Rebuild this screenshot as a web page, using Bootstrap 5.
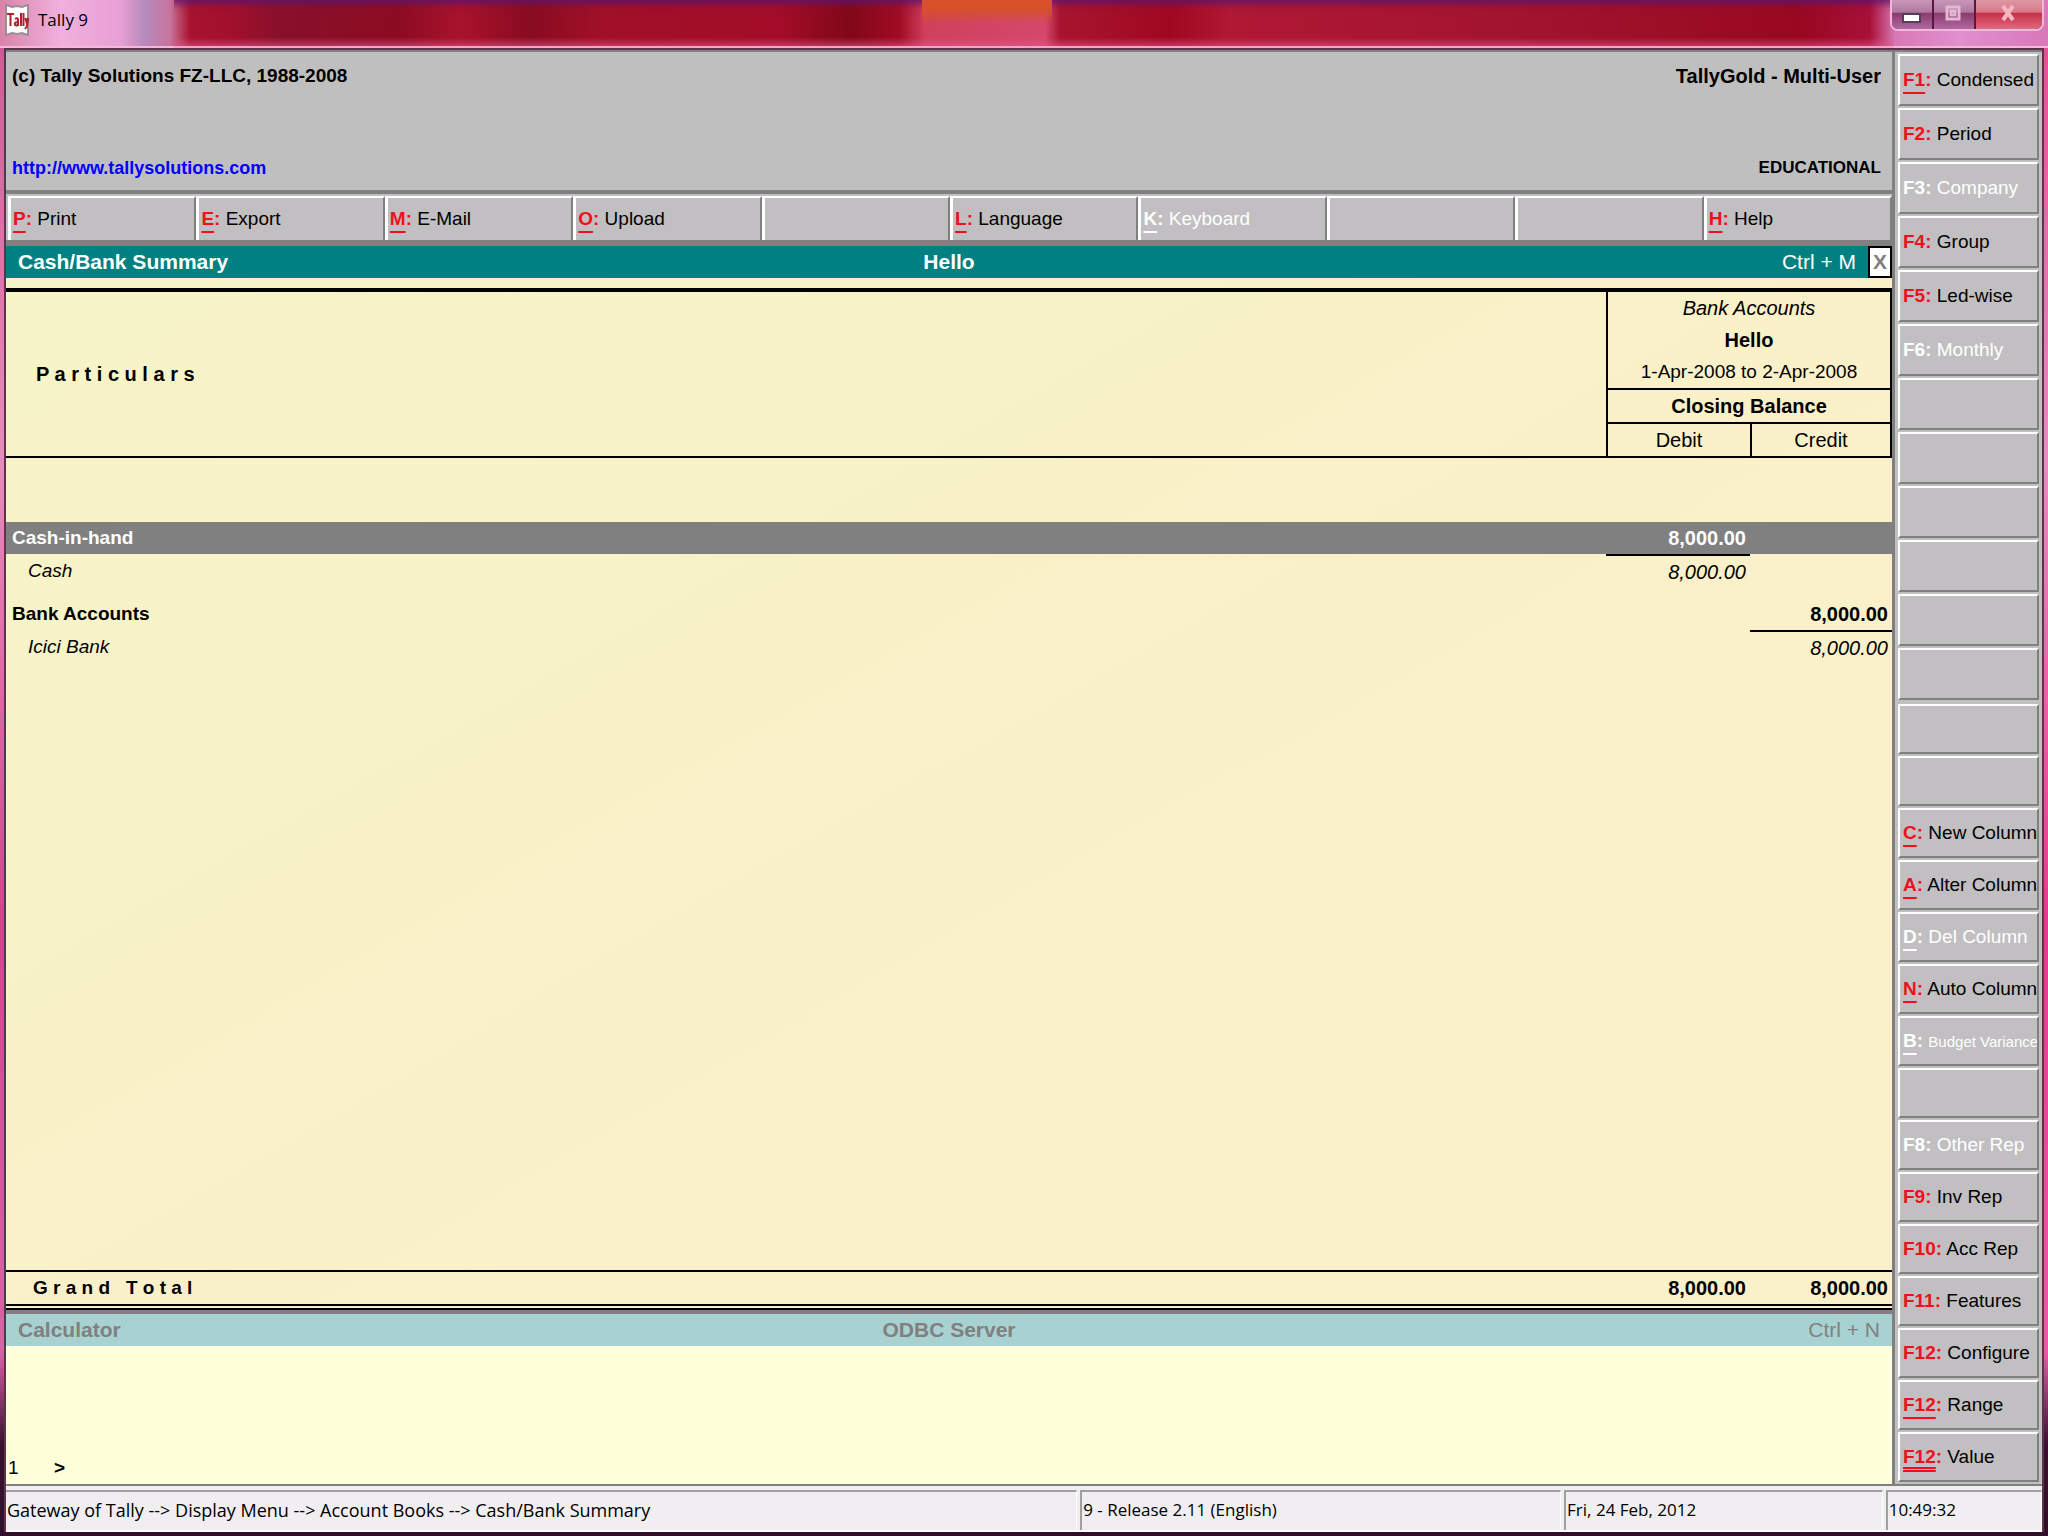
<!DOCTYPE html>
<html lang="en">
<head>
<meta charset="utf-8">
<meta name="viewport" content="width=device-width, initial-scale=1">
<title>Tally 9</title>
<link href="https://cdn.jsdelivr.net/npm/bootstrap@5.3.0/dist/css/bootstrap.min.css" rel="stylesheet">
<style>
body{height:100vh;min-height:900px;color:#000;font-family:"Liberation Sans",Arial,sans-serif;font-size:19px;line-height:32px;background:linear-gradient(180deg,#d8508f 0,#e88cc0 30%,#d9408f 60%,#e060a8 88%,#3a1030 94%,#301028 100%)}
button{font:inherit;color:inherit;border-radius:0}
.titlebar{height:48px;background:
 linear-gradient(180deg,rgba(90,20,110,.75) 0,rgba(130,10,60,.1) 18%,transparent 30%,transparent 78%,rgba(225,90,140,.5) 95%,#f0a8c8 96%) 174px 0/1720px 100% no-repeat,
 linear-gradient(180deg,transparent 95%,#f4b8d8 96%),
 linear-gradient(90deg,#d884a8 0,#f0b0dc 60px,#e8a0d4 120px,#b58abc 145px,#c8749c 170px,#a8132f 190px,#a0102c 235px,#88102a 280px,#8c0c22 400px,#a8122c 460px,#880c20 530px,#a01028 600px,#a30c28 780px,#800818 850px,#a00c24 900px,#d0405c 925px,#d4486c 1045px,#a8142f 1060px,#a00820 1170px,#b01834 1230px,#a3142f 1500px,#980820 1800px,#a81038 1870px,#d878b4 1895px,#e090cc 1960px,#d878b8 100%)}
.titletext{font-family:"Open Sans","Noto Sans",sans-serif;font-size:17px;line-height:40px}
.orange-tab{left:922px;top:0;width:130px;height:24px;background:linear-gradient(#d8522c,#d6502c 40%,transparent)}
.wbtns{width:154px;height:31px;gap:2px;border:2px solid #f0b8d8;border-top:0;border-radius:0 0 8px 8px;overflow:hidden;background:#5a1840}
.wbtns button{border:0;padding:0;background:linear-gradient(#c898b8,#b078a0 42%,#8c3c6c 46%,#b068a0);display:flex;align-items:center;justify-content:center}
.wbtns button:nth-child(1),.wbtns button:nth-child(2){width:40px}
.wbtns .close-w{flex:1;background:linear-gradient(#dc98a4,#d87888 42%,#c43048 46%,#e06a80)}
.frame-in{min-height:0;margin:0 4px 4px;border:2px solid #5c3448;border-bottom:0;background:#c0c0c0}
.workarea{min-height:0;border-top:2px solid #808080}
.info{height:142px;padding:8px 11px 6px 6px;border-bottom:4px solid #808080;background:#c0bfc0}
.info a{color:#00f;text-decoration:none;font-size:18px}
.info .licence{font-size:20px}
.info .edition{font-size:17px}
.toolbar-t{padding:2px 0 0 2px;border-bottom:6px solid #808080;background:#c0c0c0}
.tbtn{flex:1 1 0;min-width:0;height:44px;border:0;border-left:3px solid #fff;border-top:2px solid #fff;border-right:2px solid #808080;background:#c1bfc1;text-align:left;padding:0 0 0 2px;white-space:pre;overflow:hidden}
.side{width:150px;border-left:3px solid #808080;padding:2px 3px 0;gap:4px;background:#c0c0c0}
.keys{display:flex;flex-direction:column;gap:2px}
.sbtn{flex:none;height:52px;border:2px solid;border-color:#fff #808080 #808080 #fff;background:#c1bfc1;text-align:left;padding:0 0 0 3px;white-space:pre;overflow:hidden}
.keys-low .sbtn{height:50px}
.tbtn b,.sbtn b{color:#f0101c}
.tbtn u,.sbtn u{text-decoration:underline 2px;text-underline-offset:6px}
.sbtn u.twice{text-decoration-style:double;text-underline-offset:4px}
.tbtn:disabled,.sbtn:disabled,.tbtn:disabled b,.sbtn:disabled b{color:#fff}
.tight{font-size:15px}
.panebar{height:32px;background:#008080;color:#fff;font-size:21px;display:grid;grid-template-columns:1fr auto 1fr;align-items:center}
.panebar b:first-child{padding-left:12px}
.xbox{width:24px;height:32px;border:2px solid #000;background:#fff;color:#808080;font-weight:bold;padding:0;line-height:26px}
.report{min-height:0;padding-top:10px;background:linear-gradient(150deg,#f7f4c8,#f8f2c8 30%,#faf0c9 60%)}
.ledger{width:100%;height:100%;table-layout:fixed;border-collapse:separate;border-spacing:0;border-top:4px solid #000;font-size:20px}
.ledger th,.ledger td{padding:0 4px 0 6px;height:32px;line-height:32px}
.ledger tbody th,.ledger em,.ledger tfoot th,.ledger .span{font-size:19px}
.ledger em,.ledger .span{vertical-align:top}
.ledger .boxc{border-left:2px solid #000;border-bottom:2px solid #000;text-align:center;padding:0}
.ledger .edge{border-right:2px solid #000}
.ledger .parthead{border-bottom:2px solid #000;padding-left:30px}
.ledger .cur th,.ledger .cur td{background:#808080;color:#fff}
.ledger .rule{border-top:2px solid #000}
.ledger em{padding-left:16px}
.ledger .blank{height:64px}
.ledger .small-gap{height:10px;line-height:0}
.ledger .filler{height:auto}
.ledger tfoot th,.ledger tfoot td{border-top:2px solid #000;border-bottom:6px double #000;height:40px;font-weight:bold}
.ledger tfoot th{padding-left:27px}
.calc{border-top:4px solid #857c86;background:#ffffd9}
.calc .panebar{background:#a8d2d1;color:#808080}
.calcin{height:138px;padding-left:2px}
.calcin span{width:46px}
.calcin input{border:0;background:transparent;outline:0;padding:0;flex:1}
.statusrow{border-top:2px solid #808080;background:#f0eef0;padding-top:4px;border-bottom:2px solid #fff;font-family:"Open Sans","Noto Sans",sans-serif;font-size:17px;gap:3px}
.statusrow div{height:40px;line-height:36px;border-top:2px solid #a0a0a0;border-left:2px solid #a0a0a0;padding-left:1px;border-right:1px solid #fff;white-space:nowrap;overflow:hidden}
.statusrow .crumbs{flex:1067 1 0;border-left:0;font-size:18px}
.s-release{flex:476 1 0}
.s-date{flex:314 1 0}
.s-time{flex:152 1 0}
</style>
</head>
<body class="d-flex flex-column overflow-hidden">
<header class="titlebar d-flex justify-content-between align-items-start position-relative flex-shrink-0">
 <div class="orange-tab position-absolute"></div>
 <div class="d-flex align-items-start">
  <svg class="mt-1 ms-1" width="26" height="32" viewBox="0 0 26 32" aria-hidden="true"><path d="M2 1l6 2 5-1 5 1 6-2v30l-6-2-5 1-5-1-6 2z" fill="#fff" stroke="#9c8c98" stroke-width="2"/><path d="M3 10h7M6.500 10v12M11 15q3-2 3 1v6m0-4q-4 0-3 3 1 1 3 0M17 9v13M19.500 9v13M21.500 14l1.500 6 1-6-1 8-2 3" fill="none" stroke="#b02028" stroke-width="2"/></svg>
  <span class="titletext ms-2">Tally 9</span>
 </div>
 <div class="wbtns d-flex me-1">
  <button type="button" aria-label="Minimize"><svg width="20" height="24"><rect x="1" y="11" width="17" height="8" fill="#fff" stroke="#504058" stroke-width="2"/></svg></button>
  <button type="button" aria-label="Maximize"><svg width="18" height="24"><path d="M2 4h12v12H2zM6 8h4v4H6z" fill="none" stroke="#e4b8d4" stroke-width="3"/></svg></button>
  <button type="button" class="close-w" aria-label="Close"><svg width="18" height="24"><path d="M3 3l10 14M13 3L3 17" fill="none" stroke="#f4b8c4" stroke-width="4"/></svg></button>
 </div>
</header>
<main class="frame-in flex-grow-1 d-flex flex-column">
 <div class="workarea d-flex flex-grow-1">
  <div class="d-flex flex-column flex-grow-1">
   <div class="info d-flex flex-column justify-content-between flex-shrink-0 fw-bold">
    <div class="d-flex justify-content-between"><span>(c) Tally Solutions FZ-LLC, 1988-2008</span><span class="licence">TallyGold - Multi-User</span></div>
    <div class="d-flex justify-content-between"><a href="http://www.tallysolutions.com">http://www.tallysolutions.com</a><span class="edition">EDUCATIONAL</span></div>
   </div>
   <nav class="toolbar-t d-flex flex-shrink-0">
    <button class="tbtn"><b><u>P</u>:</b> Print</button><button class="tbtn"><b><u>E</u>:</b> Export</button><button class="tbtn"><b><u>M</u>:</b> E-Mail</button><button class="tbtn"><b><u>O</u>:</b> Upload</button><button class="tbtn" aria-label="Empty"></button><button class="tbtn"><b><u>L</u>:</b> Language</button><button class="tbtn" disabled><b><u>K</u>:</b> Keyboard</button><button class="tbtn" aria-label="Empty"></button><button class="tbtn" aria-label="Empty"></button><button class="tbtn"><b><u>H</u>:</b> Help</button>
   </nav>
   <div class="panebar flex-shrink-0"><b>Cash/Bank Summary</b><b>Hello</b><span class="d-flex justify-content-end gap-2"><span class="me-1">Ctrl + M</span><button class="xbox" aria-label="Close pane">X</button></span></div>
   <section class="report flex-grow-1">
    <table class="ledger">
     <colgroup><col><col style="width:144px"><col style="width:142px"></colgroup>
     <thead>
      <tr><th rowspan="3" class="parthead">P a r t i c u l a r s</th><th colspan="2" class="boxc edge fw-normal"><i>Bank Accounts</i><br><b>Hello</b><br><span class="span">1-Apr-2008 to 2-Apr-2008</span></th></tr>
      <tr><th colspan="2" class="boxc edge">Closing Balance</th></tr>
      <tr><th class="boxc fw-normal">Debit</th><th class="boxc edge fw-normal">Credit</th></tr>
     </thead>
     <tbody>
      <tr><td colspan="3" class="blank"></td></tr>
      <tr class="cur"><th>Cash-in-hand</th><td class="text-end fw-bold">8,000.00</td><td></td></tr>
      <tr><td><em>Cash</em></td><td class="text-end rule"><i>8,000.00</i></td><td></td></tr>
      <tr><td colspan="3" class="small-gap"></td></tr>
      <tr><th>Bank Accounts</th><td></td><td class="text-end fw-bold">8,000.00</td></tr>
      <tr><td><em>Icici Bank</em></td><td></td><td class="text-end rule"><i>8,000.00</i></td></tr>
      <tr><td colspan="3" class="filler"></td></tr>
     </tbody>
     <tfoot><tr><th>G r a n d &nbsp; T o t a l</th><td class="text-end">8,000.00</td><td class="text-end">8,000.00</td></tr></tfoot>
    </table>
   </section>
   <section class="calc flex-shrink-0">
    <div class="panebar"><b>Calculator</b><b>ODBC Server</b><span class="text-end pe-2 me-1">Ctrl + N</span></div>
    <label class="calcin d-flex align-items-end"><span>1</span><b>&gt;</b><input type="text" aria-label="Calculation"></label>
   </section>
  </div>
  <aside class="side d-flex flex-column flex-shrink-0">
   <div class="keys">
    <button class="sbtn"><b><u>F1</u>:</b> Condensed</button>
    <button class="sbtn"><b>F2:</b> Period</button>
    <button class="sbtn" disabled><b>F3:</b> Company</button>
    <button class="sbtn"><b>F4:</b> Group</button>
    <button class="sbtn"><b>F5:</b> Led-wise</button>
    <button class="sbtn" disabled><b>F6:</b> Monthly</button>
    <button class="sbtn" aria-label="Empty"></button>
    <button class="sbtn" aria-label="Empty"></button>
    <button class="sbtn" aria-label="Empty"></button>
    <button class="sbtn" aria-label="Empty"></button>
    <button class="sbtn" aria-label="Empty"></button>
    <button class="sbtn" aria-label="Empty"></button>
   </div>
   <div class="keys keys-low">
    <button class="sbtn" aria-label="Empty"></button>
    <button class="sbtn" aria-label="Empty"></button>
    <button class="sbtn"><b><u>C</u>:</b> New Column</button>
    <button class="sbtn"><b><u>A</u>:</b> Alter Column</button>
    <button class="sbtn" disabled><b><u>D</u>:</b> Del Column</button>
    <button class="sbtn"><b><u>N</u>:</b> Auto Column</button>
    <button class="sbtn" disabled><b><u>B</u>:</b> <span class="tight">Budget Variance</span></button>
    <button class="sbtn" aria-label="Empty"></button>
    <button class="sbtn" disabled><b>F8:</b> Other Rep</button>
    <button class="sbtn"><b>F9:</b> Inv Rep</button>
    <button class="sbtn"><b>F10:</b> Acc Rep</button>
    <button class="sbtn"><b>F11:</b> Features</button>
    <button class="sbtn"><b>F12:</b> Configure</button>
    <button class="sbtn"><b><u>F12</u>:</b> Range</button>
    <button class="sbtn"><b><u class="twice">F12</u>:</b> Value</button>
   </div>
  </aside>
 </div>
 <footer class="statusrow d-flex flex-shrink-0">
  <div class="crumbs">Gateway of Tally --&gt; Display Menu --&gt; Account Books --&gt; Cash/Bank Summary</div><div class="s-release">9 - Release 2.11 (English)</div><div class="s-date">Fri, 24 Feb, 2012</div><div class="s-time">10:49:32</div>
 </footer>
</main>
<script src="https://cdn.jsdelivr.net/npm/bootstrap@5.3.0/dist/js/bootstrap.bundle.min.js"></script>
</body>
</html>
